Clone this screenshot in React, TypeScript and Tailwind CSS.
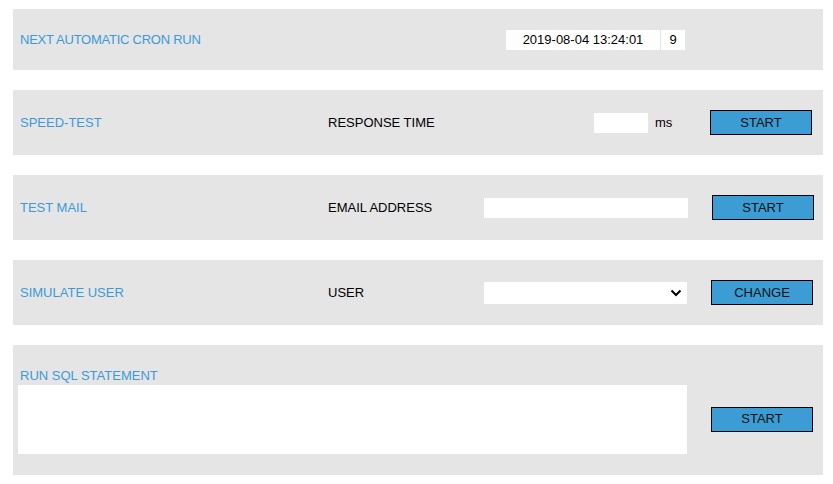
import React from "react";

function Btn({ label }: { label: string }) {
  return (
    <button
      type="button"
      className="w-[102px] h-[25px] bg-[#3c9cd4] border border-black text-[13px] leading-[15px] text-[#111] flex items-center justify-center pb-[1px]"
    >
      {label}
    </button>
  );
}

export default function App() {
  return (
    <div className="w-[833px] h-[484px] bg-white font-['Liberation_Sans',Arial,sans-serif] text-[13px] leading-[15px] text-black pt-[9px]">
      <div className="ml-[13px] w-[810px] flex flex-col gap-[20px]">
        {/* Row 1 */}
        <div className="h-[61px] bg-[#e5e5e5] flex items-center pl-[7px]">
          <div className="w-[486px] text-[#3d9ad8] tracking-[-0.25px]">NEXT AUTOMATIC CRON RUN</div>
          <div className="w-[154px] h-[20px] bg-white flex items-center justify-center">2019-08-04 13:24:01</div>
          <div className="ml-[1px] w-[24px] h-[20px] bg-white flex items-center justify-center">9</div>
        </div>

        {/* Row 2 */}
        <div className="h-[65px] bg-[#e5e5e5] flex items-center pl-[7px]">
          <div className="w-[308px] text-[#3d9ad8]">SPEED-TEST</div>
          <div className="w-[266px]">RESPONSE TIME</div>
          <input type="text" className="w-[54px] h-[20px] bg-white outline-none border-0" />
          <div className="w-[62px] pl-[7px]">ms</div>
          <Btn label="START" />
        </div>

        {/* Row 3 */}
        <div className="h-[65px] bg-[#e5e5e5] flex items-center pl-[7px]">
          <div className="w-[308px] text-[#3d9ad8]">TEST MAIL</div>
          <div className="w-[156px]">EMAIL ADDRESS</div>
          <input type="text" className="w-[204px] h-[20px] bg-white outline-none border-0" />
          <div className="ml-[24px]">
            <Btn label="START" />
          </div>
        </div>

        {/* Row 4 */}
        <div className="h-[65px] bg-[#e5e5e5] flex items-center pl-[7px]">
          <div className="w-[308px] text-[#3d9ad8]">SIMULATE USER</div>
          <div className="w-[156px]">USER</div>
          <div className="relative w-[203px] h-[22px]">
            <select className="appearance-none w-full h-full bg-white border-0 outline-none text-[13px]">
              <option></option>
            </select>
            <svg
              className="absolute right-[5px] top-[7px] pointer-events-none"
              width="12"
              height="8"
              viewBox="0 0 12 8"
            >
              <path d="M1.5 1.5 L6 6 L10.5 1.5" fill="none" stroke="#000" strokeWidth="2" />
            </svg>
          </div>
          <div className="ml-[24px]">
            <Btn label="CHANGE" />
          </div>
        </div>

        {/* Row 5 */}
        <div className="h-[130px] bg-[#e5e5e5] flex flex-col px-[5px] pt-[23px]">
          <div className="ml-[2px] h-[16px] leading-[16px] text-[#3d9ad8]">RUN SQL STATEMENT</div>
          <div className="mt-[1px] flex items-center">
            <textarea className="w-[669px] h-[69px] bg-white border-0 outline-none resize-none block" />
            <div className="ml-[24px] -mt-[1px]">
              <Btn label="START" />
            </div>
          </div>
        </div>
      </div>
    </div>
  );
}
